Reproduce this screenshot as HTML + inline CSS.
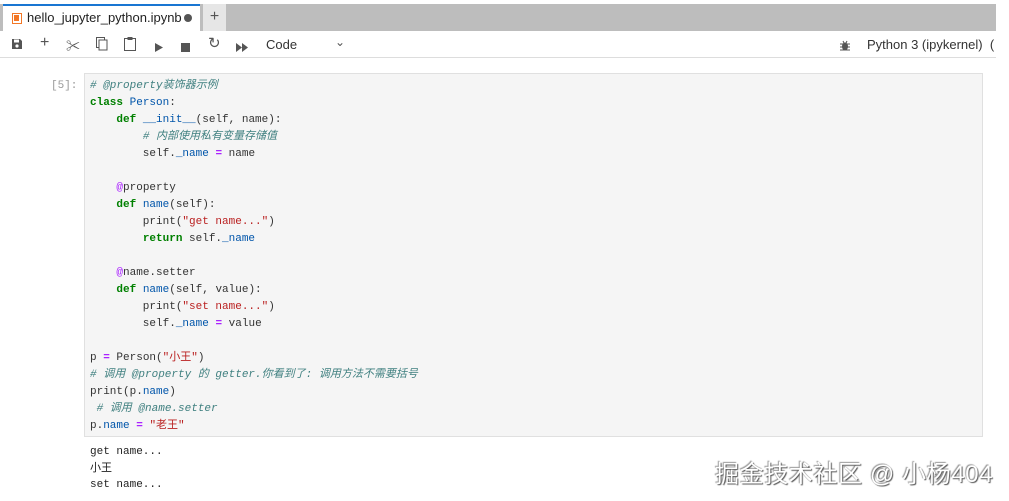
<!DOCTYPE html>
<html><head><meta charset="utf-8"><style>
*{margin:0;padding:0;box-sizing:border-box}
body{width:1009px;height:501px;background:#fff;position:relative;overflow:hidden;font-family:"Liberation Sans","Noto Sans CJK SC",sans-serif}
.topbar{position:absolute;left:0;top:4px;width:996px;height:27px;background:#bdbdbd}
.tab{position:absolute;left:3px;top:4px;width:197px;height:27px;background:#fff;border-top:2px solid #1976d2;font-size:13px;color:#222;line-height:24px;padding-left:24px}
.tab .t{position:absolute;left:24px;top:0;width:157px;overflow:hidden;white-space:nowrap}
.tab .ic{position:absolute;left:9px;top:7px;width:10px;height:11px;border:1.5px solid #f37726;background:#fff}
.tab .ic:after{content:"";position:absolute;left:1px;top:1px;width:5px;height:6px;background:#f37726}
.tab .dot{position:absolute;right:8px;top:8px;width:8px;height:8px;border-radius:50%;background:#555}
.plus{position:absolute;left:203px;top:4px;width:23px;height:27px;background:#e6e6e6;font-size:16px;color:#555;text-align:center;line-height:26px}
.tb{position:absolute;left:0;top:31px;width:996px;height:27px;border-bottom:1px solid #ddd;font-size:13px;color:#333}
.tb span{position:absolute;top:6px}
.mono{font-family:"Liberation Mono","Noto Sans CJK SC",monospace}
.prompt{position:absolute;left:51px;top:78px;font-size:11px;color:#999;line-height:17px}
.cell{position:absolute;left:84px;top:73px;width:899px;height:364px;background:#f5f5f5;border:1px solid #e0e0e0}
pre{position:absolute;left:90px;top:78px;font-size:11px;line-height:17px;color:#333}
.c{color:#408080;font-style:italic}.k{color:#008000;font-weight:bold}.n{color:#0055aa}.s{color:#ba2121}.o{color:#aa22ff;font-weight:bold}.d{color:#aa22ff}
.out{position:absolute;left:90px;top:444px;font-size:11px;line-height:16.5px;color:#222}
.wm{position:absolute;left:715px;top:454px;font-size:24px;color:#fff;text-shadow:1px 1px 1px #555,-1px -1px 1px #999;letter-spacing:0.6px;white-space:nowrap}
</style></head><body>
<div class="topbar"></div>
<div class="tab"><div class="ic"></div><div class="t">hello_jupyter_python.ipynb</div><div class="dot"></div></div>
<div class="plus">+</div>
<div class="tb">
<span style="left:11px;top:7px"><svg width="12" height="12" viewBox="0 0 12 12"><path d="M1 1h8l2 2v8H1z" fill="#555"/><rect x="3" y="1.5" width="5" height="3" fill="#fff"/><circle cx="6" cy="8" r="1.6" fill="#fff"/></svg></span>
<span style="left:40px;top:3px;font-size:16px;color:#555">+</span>
<span style="left:66px;top:5px;font-size:14px;color:#555">✂</span>
<span style="left:96px;top:6px"><svg width="12" height="14" viewBox="0 0 12 14"><rect x="0.5" y="0.5" width="8" height="10" fill="none" stroke="#555"/><rect x="3" y="3" width="8" height="10" fill="#fff" stroke="#555"/></svg></span>
<span style="left:124px;top:6px"><svg width="12" height="14" viewBox="0 0 12 14"><rect x="0.5" y="1.5" width="11" height="12" fill="none" stroke="#555"/><rect x="3.5" y="0" width="5" height="3" fill="#555"/></svg></span>
<span style="left:155px;top:9px"><svg width="8" height="9"><path d="M0 0L8 4.5L0 9z" fill="#555"/></svg></span>
<span style="left:181px;top:9px"><svg width="9" height="9"><rect width="9" height="9" fill="#555"/></svg></span>
<span style="left:208px;top:3px;font-size:15px;color:#555">↻</span>
<span style="left:236px;top:9px"><svg width="12" height="9"><path d="M0 0L6 4.5L0 9zM6 0L12 4.5L6 9z" fill="#555"/></svg></span>
<span style="left:266px">Code</span>
<span style="left:335px;top:4px;font-size:12px;color:#555">⌄</span>
<span style="left:840px;top:8px"><svg width="10" height="11" viewBox="0 0 10 11"><ellipse cx="5" cy="6.5" rx="3" ry="4" fill="#555"/><path d="M0 4h10M0 7h10M0 10h10M3 1l1 2M7 1l-1 2" stroke="#555"/></svg></span>
<span style="left:867px">Python 3 (ipykernel)&nbsp; (</span>
</div>
<div class="prompt mono">[5]:</div>
<div class="cell"></div>
<pre class="mono"><span class="c"># @property装饰器示例</span>
<span class="k">class</span> <span class="n">Person</span>:
    <span class="k">def</span> <span class="n">__init__</span>(self, name):
        <span class="c"># 内部使用私有变量存储值</span>
        self.<span class="n">_name</span> <span class="o">=</span> name

    <span class="d">@</span>property
    <span class="k">def</span> <span class="n">name</span>(self):
        print(<span class="s">"get name..."</span>)
        <span class="k">return</span> self.<span class="n">_name</span>

    <span class="d">@</span>name.setter
    <span class="k">def</span> <span class="n">name</span>(self, value):
        print(<span class="s">"set name..."</span>)
        self.<span class="n">_name</span> <span class="o">=</span> value

p <span class="o">=</span> Person(<span class="s">"小王"</span>)
<span class="c"># 调用 @property 的 getter.你看到了: 调用方法不需要括号</span>
print(p.<span class="n">name</span>)
 <span class="c"># 调用 @name.setter</span>
p.<span class="n">name</span> <span class="o">=</span> <span class="s">"老王"</span></pre>
<pre class="out mono" style="position:absolute">get name...
小王
set name...</pre>
<div class="wm">掘金技术社区 @ 小杨404</div>
</body></html>
